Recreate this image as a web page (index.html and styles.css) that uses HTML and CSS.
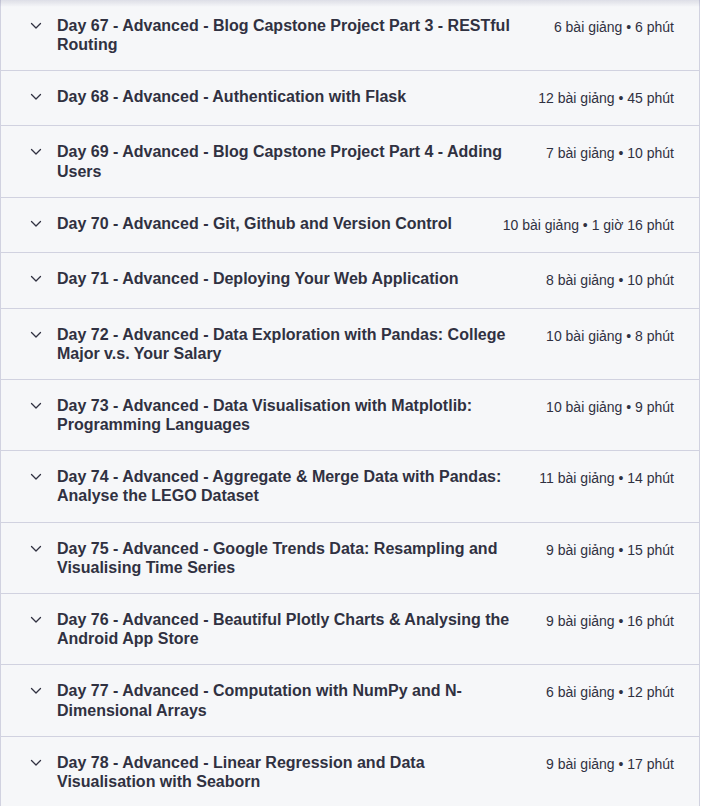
FILE: index.html
```html
<!DOCTYPE html>
<html lang="vi">
<head>
<meta charset="utf-8">
<title>Nội dung khóa học</title>
<link rel="stylesheet" href="styles.css">
</head>
<body>
<div class="curriculum">
  <div class="section">
    <svg class="chev" viewBox="0 0 14 19" width="14" height="19"><path d="M2.5 7.5 L7 12 L11.5 7.5" /></svg>
    <div class="title">Day 67 - Advanced - Blog Capstone Project Part 3 - RESTful Routing</div>
    <div class="meta">6 bài giảng • 6 phút</div>
  </div>
  <div class="section">
    <svg class="chev" viewBox="0 0 14 19" width="14" height="19"><path d="M2.5 7.5 L7 12 L11.5 7.5" /></svg>
    <div class="title">Day 68 - Advanced - Authentication with Flask</div>
    <div class="meta">12 bài giảng • 45 phút</div>
  </div>
  <div class="section">
    <svg class="chev" viewBox="0 0 14 19" width="14" height="19"><path d="M2.5 7.5 L7 12 L11.5 7.5" /></svg>
    <div class="title">Day 69 - Advanced - Blog Capstone Project Part 4 - Adding Users</div>
    <div class="meta">7 bài giảng • 10 phút</div>
  </div>
  <div class="section">
    <svg class="chev" viewBox="0 0 14 19" width="14" height="19"><path d="M2.5 7.5 L7 12 L11.5 7.5" /></svg>
    <div class="title">Day 70 - Advanced - Git, Github and Version Control</div>
    <div class="meta">10 bài giảng • 1 giờ 16 phút</div>
  </div>
  <div class="section">
    <svg class="chev" viewBox="0 0 14 19" width="14" height="19"><path d="M2.5 7.5 L7 12 L11.5 7.5" /></svg>
    <div class="title">Day 71 - Advanced - Deploying Your Web Application</div>
    <div class="meta">8 bài giảng • 10 phút</div>
  </div>
  <div class="section">
    <svg class="chev" viewBox="0 0 14 19" width="14" height="19"><path d="M2.5 7.5 L7 12 L11.5 7.5" /></svg>
    <div class="title">Day 72 - Advanced - Data Exploration with Pandas: College Major v.s. Your Salary</div>
    <div class="meta">10 bài giảng • 8 phút</div>
  </div>
  <div class="section">
    <svg class="chev" viewBox="0 0 14 19" width="14" height="19"><path d="M2.5 7.5 L7 12 L11.5 7.5" /></svg>
    <div class="title">Day 73 - Advanced - Data Visualisation with Matplotlib: Programming Languages</div>
    <div class="meta">10 bài giảng • 9 phút</div>
  </div>
  <div class="section">
    <svg class="chev" viewBox="0 0 14 19" width="14" height="19"><path d="M2.5 7.5 L7 12 L11.5 7.5" /></svg>
    <div class="title">Day 74 - Advanced - Aggregate &amp; Merge Data with Pandas: Analyse the LEGO Dataset</div>
    <div class="meta">11 bài giảng • 14 phút</div>
  </div>
  <div class="section">
    <svg class="chev" viewBox="0 0 14 19" width="14" height="19"><path d="M2.5 7.5 L7 12 L11.5 7.5" /></svg>
    <div class="title">Day 75 - Advanced - Google Trends Data: Resampling and Visualising Time Series</div>
    <div class="meta">9 bài giảng • 15 phút</div>
  </div>
  <div class="section">
    <svg class="chev" viewBox="0 0 14 19" width="14" height="19"><path d="M2.5 7.5 L7 12 L11.5 7.5" /></svg>
    <div class="title">Day 76 - Advanced - Beautiful Plotly Charts &amp; Analysing the Android App Store</div>
    <div class="meta">9 bài giảng • 16 phút</div>
  </div>
  <div class="section">
    <svg class="chev" viewBox="0 0 14 19" width="14" height="19"><path d="M2.5 7.5 L7 12 L11.5 7.5" /></svg>
    <div class="title">Day 77 - Advanced - Computation with NumPy and N-Dimensional Arrays</div>
    <div class="meta">6 bài giảng • 12 phút</div>
  </div>
  <div class="section">
    <svg class="chev" viewBox="0 0 14 19" width="14" height="19"><path d="M2.5 7.5 L7 12 L11.5 7.5" /></svg>
    <div class="title">Day 78 - Advanced - Linear Regression and Data Visualisation with Seaborn</div>
    <div class="meta">9 bài giảng • 17 phút</div>
  </div>
</div>
<div class="top-shadow"></div>
</body>
</html>
```
FILE: styles.css
```css
html, body {
  margin: 0;
  padding: 0;
  background: #ffffff;
}
body {
  font-family: "Liberation Sans", Arial, sans-serif;
  color: #303141;
  overflow: hidden;
}
.curriculum {
  width: 700px;
  box-sizing: border-box;
  border-left: 1px solid #d1d2e0;
  border-right: 1px solid #d1d2e0;
  background: #f6f7f9;
  margin-top: -1.4px;
}
.section {
  display: flex;
  align-items: flex-start;
  padding: 16px 25px 16px 28px;
  border-top: 1px solid #d1d2e0;
}
.chev {
  flex: none;
  width: 14px;
  height: 19px;
  margin-right: 14px;
}
.chev path {
  fill: none;
  stroke: #303141;
  stroke-width: 1.3;
  stroke-linecap: round;
  stroke-linejoin: round;
}
.title {
  flex: 1 1 auto;
  font-size: 16px;
  font-weight: 700;
  line-height: 1.2;
}
.meta {
  flex: none;
  margin-left: 32px;
  font-size: 14px;
  line-height: 1.6;
  color: #303141;
  white-space: nowrap;
}
.top-shadow {
  position: fixed;
  top: 0;
  left: 0;
  width: 700px;
  height: 7px;
  background: linear-gradient(to bottom, rgba(110, 110, 150, 0.18), rgba(110, 110, 150, 0));
  pointer-events: none;
}
```
